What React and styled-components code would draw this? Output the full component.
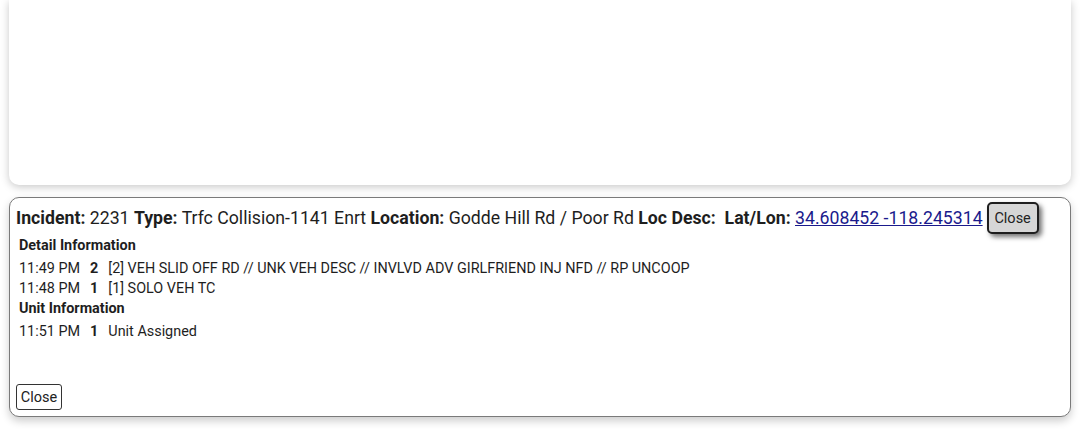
import React from "react";
import styled, { createGlobalStyle } from "styled-components";

const GlobalStyle = createGlobalStyle`
  body {
    margin: 0;
    background: #ffffff;
    font-family: Roboto, "Noto Sans", Arial, sans-serif;
    color: #1e1e1e;
  }
`;

const details = [
  { time: "11:49 PM", unit: "2", text: "[2] VEH SLID OFF RD // UNK VEH DESC // INVLVD ADV GIRLFRIEND INJ NFD // RP UNCOOP" },
  { time: "11:48 PM", unit: "1", text: "[1] SOLO VEH TC" },
];

const units = [{ time: "11:51 PM", unit: "1", text: "Unit Assigned" }];

const App = () => {
  return (
    <>
      <GlobalStyle />
      <Page>
        <MapPanel />
        <InfoPanel>
          <Header>
            <HeaderText>
              <b>Incident:</b> 2231 <b>Type:</b> Trfc Collision-1141 Enrt{" "}
              <b>Location:</b> Godde Hill Rd / Poor Rd <b>Loc Desc:</b>&nbsp;&nbsp;
              <b>Lat/Lon:</b> <CoordLink href="#">34.608452 -118.245314</CoordLink>
            </HeaderText>
            <TopClose>Close</TopClose>
          </Header>
          <Section>
            <SectionTitle>Detail Information</SectionTitle>
            {details.map((d, i) => (
              <Row key={i}>
                <Time>{d.time}</Time>
                <Unit>{d.unit}</Unit>
                <span>{d.text}</span>
              </Row>
            ))}
            <SectionTitle>Unit Information</SectionTitle>
            {units.map((d, i) => (
              <Row key={i}>
                <Time>{d.time}</Time>
                <Unit>{d.unit}</Unit>
                <span>{d.text}</span>
              </Row>
            ))}
          </Section>
          <Footer>
            <BottomClose>Close</BottomClose>
          </Footer>
        </InfoPanel>
      </Page>
    </>
  );
};

export default App;

const Page = styled.div`
  display: flex;
  flex-direction: column;
  gap: 12px;
  padding: 0 9px;
  height: 437px;
  box-sizing: border-box;
`;

const MapPanel = styled.div`
  height: 185px;
  background: #ffffff;
  border-radius: 0 0 10px 10px;
  box-shadow: 0 2px 8px rgba(0, 0, 0, 0.22);
`;

const InfoPanel = styled.div`
  height: 220px;
  box-sizing: border-box;
  display: flex;
  flex-direction: column;
  background: #ffffff;
  border: 1px solid #7a7a7a;
  border-radius: 10px;
  box-shadow: 0 4px 8px rgba(0, 0, 0, 0.2);
  padding: 4px 6px 6px 6px;
`;

const Header = styled.div`
  display: flex;
  align-items: center;
`;

const HeaderText = styled.div`
  font-size: 17.7px;
  white-space: nowrap;
  b {
    font-weight: 700;
  }
`;

const CoordLink = styled.a`
  color: #1a1a8c;
  text-decoration: underline;
`;

const TopClose = styled.button`
  margin-left: 4px;
  width: 52px;
  height: 32px;
  padding: 0;
  font-family: Roboto, Arial, sans-serif;
  font-size: 14.5px;
  color: #222;
  background: #d6d6d6;
  border: 2px solid #1e1e1e;
  border-radius: 5px;
  box-shadow: 3px 3px 5px rgba(0, 0, 0, 0.55);
`;

const Section = styled.div`
  display: flex;
  flex-direction: column;
  padding: 2px 2px 0 3px;
  font-size: 14.4px;
  line-height: 20px;
`;

const SectionTitle = styled.div`
  font-weight: 700;
  margin-bottom: 3px;
`;

const Row = styled.div`
  display: flex;
  gap: 10px;
  white-space: nowrap;
`;

const Time = styled.span``;

const Unit = styled.span`
  font-weight: 700;
`;

const Footer = styled.div`
  margin-top: auto;
  display: flex;
`;

const BottomClose = styled.button`
  width: 46px;
  height: 26px;
  padding: 0;
  font-family: Roboto, Arial, sans-serif;
  font-size: 14.5px;
  color: #222;
  background: #ffffff;
  border: 1px solid #333;
  border-radius: 3px;
`;
